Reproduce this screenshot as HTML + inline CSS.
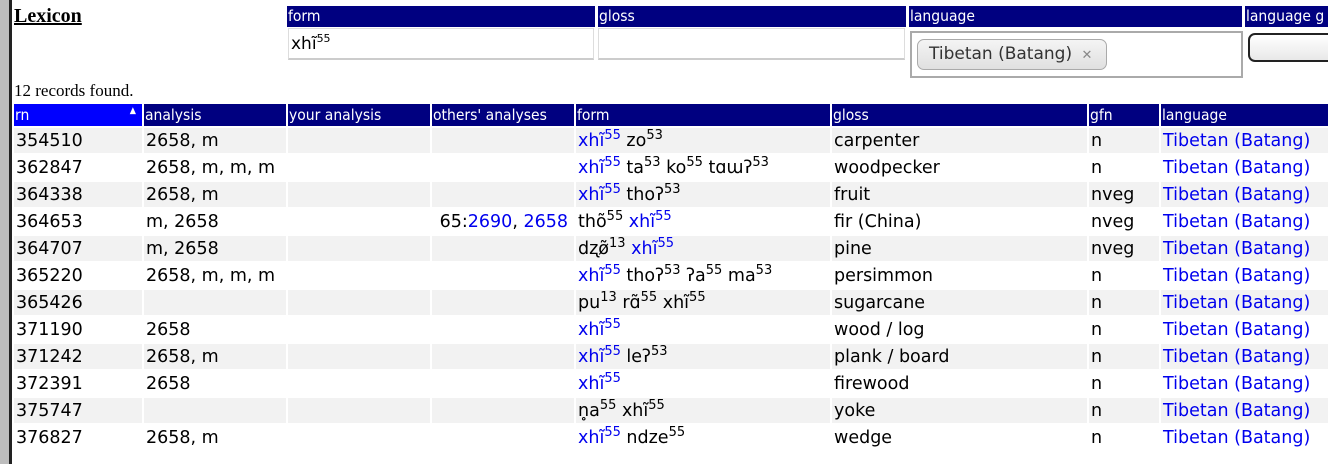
<!DOCTYPE html>
<html><head><meta charset="utf-8"><style>
body{margin:0;width:1328px;height:468px;overflow:hidden;background:#fff;position:relative;font-family:"DejaVu Sans","Liberation Sans",sans-serif;}
.bar{position:absolute;left:0;top:0;height:464px;background:#bdbdbd;border-right:3px solid #222;box-sizing:border-box;width:12px;}
.lex{position:absolute;left:14px;top:5px;font:bold 20px "Liberation Serif",serif;text-decoration:underline;}
.found{position:absolute;left:14px;top:81px;font:17px "Liberation Serif",serif;}
.hd{position:absolute;height:21px;background:#000080;color:#fff;font:15.5px "DejaVu Sans Condensed","Liberation Sans",sans-serif;line-height:21px;padding-left:1px;box-sizing:border-box;overflow:hidden;white-space:nowrap}
.inp{position:absolute;border:1px solid #ddd;border-bottom:2px solid #ccc;box-sizing:border-box;background:#fff;font-size:17px;}
table{position:absolute;left:12px;top:102px;border-spacing:2px;border-collapse:separate;table-layout:fixed;width:1340px}
th{background:#000080;color:#fff;font:normal 15.5px "DejaVu Sans Condensed","Liberation Sans",sans-serif;text-align:left;height:22px;padding:0 0 0 1px;white-space:nowrap;overflow:hidden}
th.s{background:#0000ff}
td{height:25px;padding:0 0 0 2px;font-size:17.5px;white-space:nowrap;overflow:hidden;color:#000}
tr.o td{background:#f2f2f2}
.b{color:#0000ee}
sup{font-size:13px;vertical-align:7px;line-height:0}
</style></head><body>
<div class="bar"></div>
<div class="lex">Lexicon</div>
<div class="hd" style="left:287px;top:6px;width:308px">form</div>
<div class="inp" style="left:288px;top:28px;width:306px;height:32px;padding:5px 0 0 2px">xhĩ<sup style="font-size:11px;vertical-align:7px">55</sup></div>
<div class="hd" style="left:598px;top:6px;width:308px">gloss</div>
<div class="inp" style="left:598px;top:28px;width:307px;height:32px"></div>
<div class="hd" style="left:909px;top:6px;width:333px">language</div>
<div style="position:absolute;left:910px;top:31px;width:333px;height:47px;border:2px solid #aaa;box-sizing:border-box;background:#fff"></div>
<div style="position:absolute;left:917px;top:39px;width:190px;height:31px;border:1px solid #aaa;border-radius:7px;background:linear-gradient(#f4f4f4,#e0e0e0);box-sizing:border-box;font-size:17px;color:#333;line-height:29px;padding-left:11px">Tibetan (Batang) <span style="color:#888;font-size:13px;margin-left:4px">✕</span></div>
<div class="hd" style="left:1245px;top:6px;width:90px">language g</div>
<div style="position:absolute;left:1248px;top:33px;width:100px;height:29px;border:2px solid #222;border-radius:7px;background:linear-gradient(#fff,#e8e8e8);box-sizing:border-box"></div>
<div class="found">12 records found.</div>
<table>
<colgroup><col style="width:128px"><col style="width:142px"><col style="width:142px"><col style="width:142px"><col style="width:254px"><col style="width:255px"><col style="width:70px"><col style="width:189px"></colgroup>
<tr><th class="s">rn<span style="float:right;margin-right:6px;font-size:9px">▲</span></th><th>analysis</th><th>your analysis</th><th>others' analyses</th><th>form</th><th>gloss</th><th>gfn</th><th>language</th></tr>
<tr class="o"><td>354510</td><td>2658, m</td><td></td><td></td><td><span class="b">xhĩ<sup>55</sup></span> zo<sup>53</sup></td><td>carpenter</td><td>n</td><td class="b">Tibetan (Batang)</td></tr>
<tr><td>362847</td><td>2658, m, m, m</td><td></td><td></td><td><span class="b">xhĩ<sup>55</sup></span> ta<sup>53</sup> ko<sup>55</sup> tɑɯʔ<sup>53</sup></td><td>woodpecker</td><td>n</td><td class="b">Tibetan (Batang)</td></tr>
<tr class="o"><td>364338</td><td>2658, m</td><td></td><td></td><td><span class="b">xhĩ<sup>55</sup></span> thoʔ<sup>53</sup></td><td>fruit</td><td>nveg</td><td class="b">Tibetan (Batang)</td></tr>
<tr><td>364653</td><td>m, 2658</td><td></td><td style="text-align:right;padding-right:6px">65:<span class="b">2690</span>, <span class="b">2658</span></td><td>thõ<sup>55</sup> <span class="b">xhĩ<sup>55</sup></span></td><td>fir (China)</td><td>nveg</td><td class="b">Tibetan (Batang)</td></tr>
<tr class="o"><td>364707</td><td>m, 2658</td><td></td><td></td><td>dʐø̃<sup>13</sup> <span class="b">xhĩ<sup>55</sup></span></td><td>pine</td><td>nveg</td><td class="b">Tibetan (Batang)</td></tr>
<tr><td>365220</td><td>2658, m, m, m</td><td></td><td></td><td><span class="b">xhĩ<sup>55</sup></span> thoʔ<sup>53</sup> ʔa<sup>55</sup> ma<sup>53</sup></td><td>persimmon</td><td>n</td><td class="b">Tibetan (Batang)</td></tr>
<tr class="o"><td>365426</td><td></td><td></td><td></td><td>pu<sup>13</sup> rɑ̃<sup>55</sup> xhĩ<sup>55</sup></td><td>sugarcane</td><td>n</td><td class="b">Tibetan (Batang)</td></tr>
<tr><td>371190</td><td>2658</td><td></td><td></td><td><span class="b">xhĩ<sup>55</sup></span></td><td>wood / log</td><td>n</td><td class="b">Tibetan (Batang)</td></tr>
<tr class="o"><td>371242</td><td>2658, m</td><td></td><td></td><td><span class="b">xhĩ<sup>55</sup></span> leʔ<sup>53</sup></td><td>plank / board</td><td>n</td><td class="b">Tibetan (Batang)</td></tr>
<tr><td>372391</td><td>2658</td><td></td><td></td><td><span class="b">xhĩ<sup>55</sup></span></td><td>firewood</td><td>n</td><td class="b">Tibetan (Batang)</td></tr>
<tr class="o"><td>375747</td><td></td><td></td><td></td><td>n̥a<sup>55</sup> xhĩ<sup>55</sup></td><td>yoke</td><td>n</td><td class="b">Tibetan (Batang)</td></tr>
<tr><td>376827</td><td>2658, m</td><td></td><td></td><td><span class="b">xhĩ<sup>55</sup></span> ndze<sup>55</sup></td><td>wedge</td><td>n</td><td class="b">Tibetan (Batang)</td></tr>
</table>
</body></html>
